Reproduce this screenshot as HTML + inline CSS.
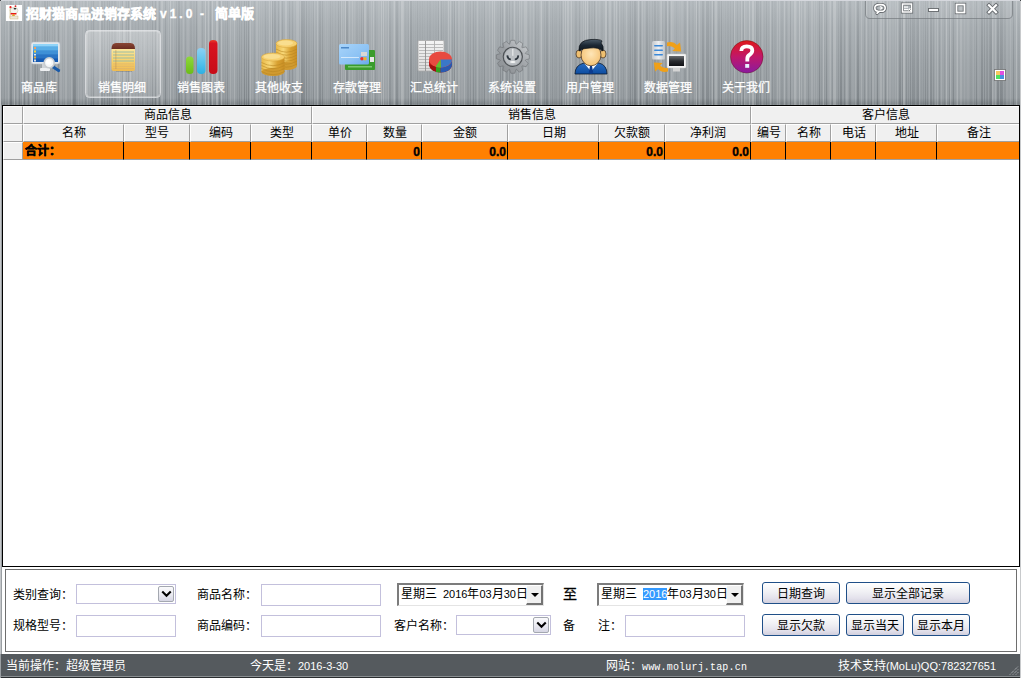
<!DOCTYPE html><html lang="zh-CN"><head><meta charset="utf-8"><style>
*{margin:0;padding:0;box-sizing:border-box}
html,body{width:1021px;height:678px;overflow:hidden;background:#fff}
body{position:relative;font-family:"Liberation Sans",sans-serif;font-size:12px;color:#000}
.a{position:absolute;white-space:nowrap}
.c{display:inline-block;width:1em;text-align:center;font-style:normal}
.d{font-size:11px}
#metal{position:absolute;left:0;top:0;width:1021px;height:678px;background:linear-gradient(#b6bcc0 0px,#aab0b4 25px,#a0a6aa 60px,#989ea2 98px,#80878b 104px,#9a9fa3 106px,#9a9fa3 678px)}
#metal svg{position:absolute;left:0;top:0}
#grid{position:absolute;left:2px;top:105px;width:1018px;height:462px;border:1px solid #000;background:#fff;overflow:hidden}
.hc{position:absolute;background:#f0f0f0;border-left:1px solid #fff;border-top:1px solid #fff;border-right:1px solid #a0a0a0;border-bottom:1px solid #a0a0a0;text-align:center;line-height:16px;font-size:12px;white-space:nowrap}
.oc{position:absolute;background:#ff8000;border-right:1px solid #000;border-bottom:1px solid #a0a0a0;text-align:right;font-weight:bold;line-height:20px;padding-right:1px;font-size:12px;-webkit-text-stroke:0.4px #000;white-space:nowrap}
#lower{position:absolute;left:2px;top:567px;width:1018px;height:87px;background:#fff}
#panel{position:absolute;left:5px;top:569px;width:1012px;height:83px;border:1px solid #6e6e6e;background:#fff}
#status{position:absolute;left:1px;top:654px;width:1019px;height:24px;background:#555a5e;border-bottom:1px solid #2a2d2f}
#status:after{content:"";position:absolute;left:0;right:0;top:22px;height:1px;background:#8a8f92}
.st{position:absolute;color:#fff;top:6px;line-height:12px;font-size:12px;white-space:nowrap}
.tb{position:absolute;color:#fff;-webkit-text-stroke:0.25px #fff;top:82px;line-height:13px;font-size:12px;white-space:nowrap;text-align:center;width:78px}
.lbl{position:absolute;line-height:14px;font-size:12px;white-space:nowrap}
.tx{position:absolute;border:1px solid #c3c0dc;background:#fff}
.cb{position:absolute;border:1px solid #a4a8b0;border-radius:2px;background:linear-gradient(#fafafc,#ececf2 50%,#d6d6e4)}
.btn{position:absolute;border:1px solid #1f4f88;border-radius:3px;background:linear-gradient(#ffffff,#f0f0f4 45%,#e4e2ec 75%,#d2d0de);text-align:center;line-height:21px;padding-top:1px;font-size:12px;white-space:nowrap}
.dp{position:absolute;width:147px;height:23px;background:#fff;border-top:2px solid #7c7c7c;border-left:2px solid #7c7c7c;border-bottom:1px solid #e4e4e4;border-right:1px solid #e4e4e4}
.dpb{position:absolute;left:127px;top:0px;width:17px;height:20px;background:#f0f0f0;border-left:1px solid #fff;border-top:1px solid #fff;border-right:2px solid #737373;border-bottom:2px solid #737373}
.dpb:after{content:"";position:absolute;left:4px;top:7px;border-left:4px solid transparent;border-right:4px solid transparent;border-top:4px solid #000}
.sp{display:inline-block;width:6px}
</style></head><body><div id="metal"><svg width="1021" height="106"><defs><linearGradient id="ds" x1="0" y1="0" x2="0" y2="1"><stop offset="0" stop-color="#2a3036" stop-opacity="0.35"/><stop offset="1" stop-color="#2a3036" stop-opacity="1"/></linearGradient></defs><rect x="0" y="0" width="1" height="106" fill="url(#ds)" fill-opacity="0.12"/><rect x="1" y="0" width="1" height="106" fill="url(#ds)" fill-opacity="0.06"/><rect x="4" y="0" width="1" height="106" fill="url(#ds)" fill-opacity="0.08"/><rect x="5" y="0" width="1" height="106" fill="#ffffff" fill-opacity="0.08"/><rect x="8" y="0" width="1" height="106" fill="#ffffff" fill-opacity="0.14"/><rect x="10" y="0" width="2" height="106" fill="url(#ds)" fill-opacity="0.23"/><rect x="14" y="0" width="1" height="106" fill="#ffffff" fill-opacity="0.22"/><rect x="15" y="0" width="1" height="106" fill="url(#ds)" fill-opacity="0.10"/><rect x="17" y="0" width="1" height="106" fill="#ffffff" fill-opacity="0.10"/><rect x="19" y="0" width="1" height="106" fill="url(#ds)" fill-opacity="0.17"/><rect x="21" y="0" width="1" height="106" fill="url(#ds)" fill-opacity="0.05"/><rect x="22" y="0" width="1" height="106" fill="#ffffff" fill-opacity="0.16"/><rect x="24" y="0" width="1" height="106" fill="url(#ds)" fill-opacity="0.22"/><rect x="26" y="0" width="1" height="106" fill="#ffffff" fill-opacity="0.07"/><rect x="28" y="0" width="1" height="106" fill="url(#ds)" fill-opacity="0.15"/><rect x="30" y="0" width="2" height="106" fill="#ffffff" fill-opacity="0.15"/><rect x="32" y="0" width="1" height="106" fill="url(#ds)" fill-opacity="0.07"/><rect x="34" y="0" width="1" height="106" fill="url(#ds)" fill-opacity="0.12"/><rect x="35" y="0" width="1" height="106" fill="url(#ds)" fill-opacity="0.22"/><rect x="37" y="0" width="1" height="106" fill="url(#ds)" fill-opacity="0.16"/><rect x="40" y="0" width="1" height="106" fill="#ffffff" fill-opacity="0.06"/><rect x="42" y="0" width="1" height="106" fill="url(#ds)" fill-opacity="0.05"/><rect x="44" y="0" width="2" height="106" fill="url(#ds)" fill-opacity="0.18"/><rect x="47" y="0" width="1" height="106" fill="url(#ds)" fill-opacity="0.22"/><rect x="49" y="0" width="1" height="106" fill="url(#ds)" fill-opacity="0.11"/><rect x="52" y="0" width="1" height="106" fill="url(#ds)" fill-opacity="0.08"/><rect x="54" y="0" width="1" height="106" fill="url(#ds)" fill-opacity="0.12"/><rect x="56" y="0" width="1" height="106" fill="#ffffff" fill-opacity="0.11"/><rect x="58" y="0" width="1" height="106" fill="url(#ds)" fill-opacity="0.21"/><rect x="60" y="0" width="2" height="106" fill="#ffffff" fill-opacity="0.10"/><rect x="63" y="0" width="1" height="106" fill="#ffffff" fill-opacity="0.07"/><rect x="65" y="0" width="2" height="106" fill="#ffffff" fill-opacity="0.13"/><rect x="69" y="0" width="1" height="106" fill="#ffffff" fill-opacity="0.04"/><rect x="71" y="0" width="1" height="106" fill="#ffffff" fill-opacity="0.14"/><rect x="73" y="0" width="2" height="106" fill="url(#ds)" fill-opacity="0.23"/><rect x="75" y="0" width="1" height="106" fill="url(#ds)" fill-opacity="0.20"/><rect x="78" y="0" width="1" height="106" fill="#ffffff" fill-opacity="0.11"/><rect x="80" y="0" width="2" height="106" fill="#ffffff" fill-opacity="0.07"/><rect x="83" y="0" width="1" height="106" fill="#ffffff" fill-opacity="0.10"/><rect x="84" y="0" width="1" height="106" fill="#ffffff" fill-opacity="0.07"/><rect x="85" y="0" width="1" height="106" fill="url(#ds)" fill-opacity="0.05"/><rect x="87" y="0" width="1" height="106" fill="#ffffff" fill-opacity="0.15"/><rect x="89" y="0" width="1" height="106" fill="#ffffff" fill-opacity="0.06"/><rect x="91" y="0" width="1" height="106" fill="url(#ds)" fill-opacity="0.10"/><rect x="93" y="0" width="1" height="106" fill="url(#ds)" fill-opacity="0.19"/><rect x="95" y="0" width="2" height="106" fill="#ffffff" fill-opacity="0.04"/><rect x="99" y="0" width="1" height="106" fill="#ffffff" fill-opacity="0.14"/><rect x="100" y="0" width="1" height="106" fill="#ffffff" fill-opacity="0.16"/><rect x="101" y="0" width="2" height="106" fill="url(#ds)" fill-opacity="0.14"/><rect x="104" y="0" width="1" height="106" fill="url(#ds)" fill-opacity="0.15"/><rect x="107" y="0" width="1" height="106" fill="url(#ds)" fill-opacity="0.16"/><rect x="109" y="0" width="1" height="106" fill="url(#ds)" fill-opacity="0.19"/><rect x="111" y="0" width="1" height="106" fill="url(#ds)" fill-opacity="0.11"/><rect x="112" y="0" width="1" height="106" fill="url(#ds)" fill-opacity="0.13"/><rect x="114" y="0" width="2" height="106" fill="url(#ds)" fill-opacity="0.11"/><rect x="117" y="0" width="1" height="106" fill="#ffffff" fill-opacity="0.06"/><rect x="119" y="0" width="1" height="106" fill="#ffffff" fill-opacity="0.13"/><rect x="122" y="0" width="1" height="106" fill="url(#ds)" fill-opacity="0.17"/><rect x="123" y="0" width="2" height="106" fill="#ffffff" fill-opacity="0.11"/><rect x="126" y="0" width="1" height="106" fill="url(#ds)" fill-opacity="0.13"/><rect x="128" y="0" width="1" height="106" fill="url(#ds)" fill-opacity="0.23"/><rect x="130" y="0" width="1" height="106" fill="#ffffff" fill-opacity="0.21"/><rect x="132" y="0" width="1" height="106" fill="url(#ds)" fill-opacity="0.05"/><rect x="135" y="0" width="1" height="106" fill="url(#ds)" fill-opacity="0.07"/><rect x="138" y="0" width="1" height="106" fill="url(#ds)" fill-opacity="0.11"/><rect x="141" y="0" width="1" height="106" fill="#ffffff" fill-opacity="0.04"/><rect x="142" y="0" width="1" height="106" fill="url(#ds)" fill-opacity="0.07"/><rect x="144" y="0" width="1" height="106" fill="#ffffff" fill-opacity="0.08"/><rect x="147" y="0" width="1" height="106" fill="url(#ds)" fill-opacity="0.11"/><rect x="150" y="0" width="1" height="106" fill="url(#ds)" fill-opacity="0.05"/><rect x="152" y="0" width="1" height="106" fill="url(#ds)" fill-opacity="0.20"/><rect x="155" y="0" width="1" height="106" fill="url(#ds)" fill-opacity="0.22"/><rect x="157" y="0" width="1" height="106" fill="#ffffff" fill-opacity="0.13"/><rect x="159" y="0" width="1" height="106" fill="url(#ds)" fill-opacity="0.20"/><rect x="161" y="0" width="1" height="106" fill="#ffffff" fill-opacity="0.15"/><rect x="162" y="0" width="1" height="106" fill="#ffffff" fill-opacity="0.16"/><rect x="165" y="0" width="1" height="106" fill="url(#ds)" fill-opacity="0.20"/><rect x="168" y="0" width="1" height="106" fill="#ffffff" fill-opacity="0.09"/><rect x="169" y="0" width="1" height="106" fill="url(#ds)" fill-opacity="0.05"/><rect x="170" y="0" width="1" height="106" fill="#ffffff" fill-opacity="0.22"/><rect x="173" y="0" width="1" height="106" fill="#ffffff" fill-opacity="0.09"/><rect x="176" y="0" width="1" height="106" fill="url(#ds)" fill-opacity="0.14"/><rect x="178" y="0" width="2" height="106" fill="url(#ds)" fill-opacity="0.22"/><rect x="181" y="0" width="1" height="106" fill="url(#ds)" fill-opacity="0.08"/><rect x="183" y="0" width="1" height="106" fill="#ffffff" fill-opacity="0.11"/><rect x="185" y="0" width="1" height="106" fill="url(#ds)" fill-opacity="0.13"/><rect x="187" y="0" width="2" height="106" fill="#ffffff" fill-opacity="0.06"/><rect x="190" y="0" width="2" height="106" fill="url(#ds)" fill-opacity="0.11"/><rect x="193" y="0" width="1" height="106" fill="url(#ds)" fill-opacity="0.08"/><rect x="194" y="0" width="1" height="106" fill="url(#ds)" fill-opacity="0.07"/><rect x="196" y="0" width="1" height="106" fill="url(#ds)" fill-opacity="0.24"/><rect x="198" y="0" width="1" height="106" fill="#ffffff" fill-opacity="0.10"/><rect x="199" y="0" width="2" height="106" fill="#ffffff" fill-opacity="0.10"/><rect x="202" y="0" width="1" height="106" fill="url(#ds)" fill-opacity="0.12"/><rect x="205" y="0" width="1" height="106" fill="#ffffff" fill-opacity="0.21"/><rect x="206" y="0" width="1" height="106" fill="url(#ds)" fill-opacity="0.06"/><rect x="208" y="0" width="1" height="106" fill="#ffffff" fill-opacity="0.18"/><rect x="210" y="0" width="1" height="106" fill="url(#ds)" fill-opacity="0.21"/><rect x="212" y="0" width="1" height="106" fill="#ffffff" fill-opacity="0.21"/><rect x="215" y="0" width="1" height="106" fill="url(#ds)" fill-opacity="0.06"/><rect x="216" y="0" width="2" height="106" fill="#ffffff" fill-opacity="0.20"/><rect x="219" y="0" width="1" height="106" fill="url(#ds)" fill-opacity="0.20"/><rect x="220" y="0" width="1" height="106" fill="url(#ds)" fill-opacity="0.05"/><rect x="221" y="0" width="1" height="106" fill="#ffffff" fill-opacity="0.22"/><rect x="223" y="0" width="1" height="106" fill="url(#ds)" fill-opacity="0.05"/><rect x="225" y="0" width="1" height="106" fill="url(#ds)" fill-opacity="0.09"/><rect x="227" y="0" width="1" height="106" fill="url(#ds)" fill-opacity="0.17"/><rect x="230" y="0" width="1" height="106" fill="#ffffff" fill-opacity="0.13"/><rect x="232" y="0" width="1" height="106" fill="#ffffff" fill-opacity="0.04"/><rect x="234" y="0" width="1" height="106" fill="#ffffff" fill-opacity="0.17"/><rect x="237" y="0" width="1" height="106" fill="url(#ds)" fill-opacity="0.09"/><rect x="239" y="0" width="1" height="106" fill="url(#ds)" fill-opacity="0.17"/><rect x="241" y="0" width="1" height="106" fill="url(#ds)" fill-opacity="0.12"/><rect x="244" y="0" width="1" height="106" fill="url(#ds)" fill-opacity="0.24"/><rect x="246" y="0" width="1" height="106" fill="url(#ds)" fill-opacity="0.18"/><rect x="248" y="0" width="1" height="106" fill="url(#ds)" fill-opacity="0.24"/><rect x="250" y="0" width="1" height="106" fill="#ffffff" fill-opacity="0.17"/><rect x="252" y="0" width="1" height="106" fill="#ffffff" fill-opacity="0.06"/><rect x="254" y="0" width="1" height="106" fill="url(#ds)" fill-opacity="0.10"/><rect x="256" y="0" width="2" height="106" fill="#ffffff" fill-opacity="0.12"/><rect x="259" y="0" width="1" height="106" fill="#ffffff" fill-opacity="0.09"/><rect x="261" y="0" width="1" height="106" fill="#ffffff" fill-opacity="0.05"/><rect x="263" y="0" width="1" height="106" fill="#ffffff" fill-opacity="0.04"/><rect x="265" y="0" width="1" height="106" fill="url(#ds)" fill-opacity="0.14"/><rect x="267" y="0" width="1" height="106" fill="url(#ds)" fill-opacity="0.04"/><rect x="269" y="0" width="1" height="106" fill="#ffffff" fill-opacity="0.15"/><rect x="271" y="0" width="1" height="106" fill="#ffffff" fill-opacity="0.15"/><rect x="272" y="0" width="1" height="106" fill="url(#ds)" fill-opacity="0.21"/><rect x="274" y="0" width="2" height="106" fill="url(#ds)" fill-opacity="0.20"/><rect x="278" y="0" width="1" height="106" fill="url(#ds)" fill-opacity="0.18"/><rect x="280" y="0" width="1" height="106" fill="#ffffff" fill-opacity="0.15"/><rect x="282" y="0" width="1" height="106" fill="url(#ds)" fill-opacity="0.18"/><rect x="285" y="0" width="2" height="106" fill="#ffffff" fill-opacity="0.17"/><rect x="289" y="0" width="1" height="106" fill="url(#ds)" fill-opacity="0.19"/><rect x="292" y="0" width="1" height="106" fill="url(#ds)" fill-opacity="0.16"/><rect x="294" y="0" width="1" height="106" fill="#ffffff" fill-opacity="0.06"/><rect x="296" y="0" width="1" height="106" fill="#ffffff" fill-opacity="0.12"/><rect x="297" y="0" width="2" height="106" fill="#ffffff" fill-opacity="0.14"/><rect x="300" y="0" width="1" height="106" fill="#ffffff" fill-opacity="0.12"/><rect x="301" y="0" width="2" height="106" fill="url(#ds)" fill-opacity="0.22"/><rect x="303" y="0" width="2" height="106" fill="url(#ds)" fill-opacity="0.19"/><rect x="306" y="0" width="1" height="106" fill="url(#ds)" fill-opacity="0.21"/><rect x="308" y="0" width="2" height="106" fill="url(#ds)" fill-opacity="0.09"/><rect x="311" y="0" width="1" height="106" fill="url(#ds)" fill-opacity="0.06"/><rect x="313" y="0" width="1" height="106" fill="url(#ds)" fill-opacity="0.17"/><rect x="314" y="0" width="1" height="106" fill="#ffffff" fill-opacity="0.09"/><rect x="316" y="0" width="1" height="106" fill="url(#ds)" fill-opacity="0.04"/><rect x="317" y="0" width="1" height="106" fill="#ffffff" fill-opacity="0.16"/><rect x="319" y="0" width="2" height="106" fill="url(#ds)" fill-opacity="0.18"/><rect x="322" y="0" width="1" height="106" fill="url(#ds)" fill-opacity="0.19"/><rect x="325" y="0" width="1" height="106" fill="#ffffff" fill-opacity="0.06"/><rect x="327" y="0" width="1" height="106" fill="#ffffff" fill-opacity="0.05"/><rect x="330" y="0" width="1" height="106" fill="url(#ds)" fill-opacity="0.12"/><rect x="332" y="0" width="1" height="106" fill="url(#ds)" fill-opacity="0.07"/><rect x="335" y="0" width="1" height="106" fill="url(#ds)" fill-opacity="0.07"/><rect x="338" y="0" width="1" height="106" fill="url(#ds)" fill-opacity="0.18"/><rect x="340" y="0" width="1" height="106" fill="url(#ds)" fill-opacity="0.14"/><rect x="341" y="0" width="1" height="106" fill="#ffffff" fill-opacity="0.13"/><rect x="343" y="0" width="1" height="106" fill="#ffffff" fill-opacity="0.07"/><rect x="345" y="0" width="1" height="106" fill="#ffffff" fill-opacity="0.19"/><rect x="346" y="0" width="1" height="106" fill="url(#ds)" fill-opacity="0.21"/><rect x="347" y="0" width="1" height="106" fill="url(#ds)" fill-opacity="0.22"/><rect x="349" y="0" width="1" height="106" fill="#ffffff" fill-opacity="0.11"/><rect x="352" y="0" width="1" height="106" fill="#ffffff" fill-opacity="0.12"/><rect x="354" y="0" width="1" height="106" fill="#ffffff" fill-opacity="0.05"/><rect x="356" y="0" width="2" height="106" fill="url(#ds)" fill-opacity="0.09"/><rect x="359" y="0" width="1" height="106" fill="url(#ds)" fill-opacity="0.08"/><rect x="361" y="0" width="1" height="106" fill="url(#ds)" fill-opacity="0.20"/><rect x="363" y="0" width="1" height="106" fill="url(#ds)" fill-opacity="0.18"/><rect x="364" y="0" width="2" height="106" fill="#ffffff" fill-opacity="0.15"/><rect x="367" y="0" width="2" height="106" fill="url(#ds)" fill-opacity="0.14"/><rect x="371" y="0" width="1" height="106" fill="#ffffff" fill-opacity="0.11"/><rect x="373" y="0" width="1" height="106" fill="#ffffff" fill-opacity="0.17"/><rect x="375" y="0" width="1" height="106" fill="url(#ds)" fill-opacity="0.10"/><rect x="378" y="0" width="2" height="106" fill="#ffffff" fill-opacity="0.07"/><rect x="381" y="0" width="1" height="106" fill="#ffffff" fill-opacity="0.20"/><rect x="383" y="0" width="1" height="106" fill="#ffffff" fill-opacity="0.20"/><rect x="385" y="0" width="1" height="106" fill="#ffffff" fill-opacity="0.07"/><rect x="386" y="0" width="1" height="106" fill="#ffffff" fill-opacity="0.06"/><rect x="388" y="0" width="1" height="106" fill="#ffffff" fill-opacity="0.14"/><rect x="389" y="0" width="2" height="106" fill="url(#ds)" fill-opacity="0.12"/><rect x="393" y="0" width="1" height="106" fill="#ffffff" fill-opacity="0.10"/><rect x="394" y="0" width="1" height="106" fill="#ffffff" fill-opacity="0.21"/><rect x="396" y="0" width="2" height="106" fill="url(#ds)" fill-opacity="0.17"/><rect x="399" y="0" width="1" height="106" fill="#ffffff" fill-opacity="0.08"/><rect x="401" y="0" width="2" height="106" fill="#ffffff" fill-opacity="0.21"/><rect x="403" y="0" width="1" height="106" fill="#ffffff" fill-opacity="0.17"/><rect x="405" y="0" width="1" height="106" fill="url(#ds)" fill-opacity="0.05"/><rect x="408" y="0" width="1" height="106" fill="url(#ds)" fill-opacity="0.09"/><rect x="409" y="0" width="1" height="106" fill="#ffffff" fill-opacity="0.13"/><rect x="410" y="0" width="2" height="106" fill="url(#ds)" fill-opacity="0.21"/><rect x="413" y="0" width="1" height="106" fill="url(#ds)" fill-opacity="0.05"/><rect x="415" y="0" width="1" height="106" fill="url(#ds)" fill-opacity="0.05"/><rect x="417" y="0" width="1" height="106" fill="url(#ds)" fill-opacity="0.15"/><rect x="419" y="0" width="2" height="106" fill="url(#ds)" fill-opacity="0.06"/><rect x="422" y="0" width="1" height="106" fill="url(#ds)" fill-opacity="0.08"/><rect x="424" y="0" width="1" height="106" fill="url(#ds)" fill-opacity="0.04"/><rect x="427" y="0" width="1" height="106" fill="url(#ds)" fill-opacity="0.10"/><rect x="429" y="0" width="2" height="106" fill="url(#ds)" fill-opacity="0.09"/><rect x="433" y="0" width="1" height="106" fill="url(#ds)" fill-opacity="0.05"/><rect x="435" y="0" width="2" height="106" fill="url(#ds)" fill-opacity="0.05"/><rect x="438" y="0" width="1" height="106" fill="url(#ds)" fill-opacity="0.17"/><rect x="439" y="0" width="1" height="106" fill="#ffffff" fill-opacity="0.12"/><rect x="441" y="0" width="1" height="106" fill="url(#ds)" fill-opacity="0.18"/><rect x="443" y="0" width="1" height="106" fill="url(#ds)" fill-opacity="0.08"/><rect x="445" y="0" width="2" height="106" fill="url(#ds)" fill-opacity="0.05"/><rect x="448" y="0" width="1" height="106" fill="#ffffff" fill-opacity="0.19"/><rect x="450" y="0" width="1" height="106" fill="#ffffff" fill-opacity="0.18"/><rect x="452" y="0" width="1" height="106" fill="url(#ds)" fill-opacity="0.14"/><rect x="454" y="0" width="1" height="106" fill="url(#ds)" fill-opacity="0.22"/><rect x="455" y="0" width="1" height="106" fill="#ffffff" fill-opacity="0.11"/><rect x="457" y="0" width="1" height="106" fill="url(#ds)" fill-opacity="0.07"/><rect x="458" y="0" width="2" height="106" fill="#ffffff" fill-opacity="0.11"/><rect x="461" y="0" width="2" height="106" fill="#ffffff" fill-opacity="0.05"/><rect x="464" y="0" width="1" height="106" fill="#ffffff" fill-opacity="0.16"/><rect x="467" y="0" width="2" height="106" fill="url(#ds)" fill-opacity="0.10"/><rect x="470" y="0" width="1" height="106" fill="url(#ds)" fill-opacity="0.13"/><rect x="471" y="0" width="1" height="106" fill="#ffffff" fill-opacity="0.05"/><rect x="473" y="0" width="1" height="106" fill="url(#ds)" fill-opacity="0.19"/><rect x="475" y="0" width="1" height="106" fill="url(#ds)" fill-opacity="0.10"/><rect x="477" y="0" width="1" height="106" fill="#ffffff" fill-opacity="0.13"/><rect x="479" y="0" width="1" height="106" fill="url(#ds)" fill-opacity="0.08"/><rect x="481" y="0" width="2" height="106" fill="url(#ds)" fill-opacity="0.05"/><rect x="484" y="0" width="1" height="106" fill="url(#ds)" fill-opacity="0.19"/><rect x="485" y="0" width="1" height="106" fill="#ffffff" fill-opacity="0.05"/><rect x="486" y="0" width="1" height="106" fill="#ffffff" fill-opacity="0.05"/><rect x="489" y="0" width="1" height="106" fill="#ffffff" fill-opacity="0.10"/><rect x="492" y="0" width="1" height="106" fill="#ffffff" fill-opacity="0.17"/><rect x="494" y="0" width="1" height="106" fill="#ffffff" fill-opacity="0.17"/><rect x="497" y="0" width="2" height="106" fill="url(#ds)" fill-opacity="0.05"/><rect x="500" y="0" width="1" height="106" fill="url(#ds)" fill-opacity="0.23"/><rect x="502" y="0" width="1" height="106" fill="url(#ds)" fill-opacity="0.20"/><rect x="504" y="0" width="1" height="106" fill="#ffffff" fill-opacity="0.18"/><rect x="506" y="0" width="2" height="106" fill="url(#ds)" fill-opacity="0.16"/><rect x="509" y="0" width="1" height="106" fill="url(#ds)" fill-opacity="0.20"/><rect x="512" y="0" width="1" height="106" fill="url(#ds)" fill-opacity="0.12"/><rect x="514" y="0" width="1" height="106" fill="#ffffff" fill-opacity="0.16"/><rect x="516" y="0" width="1" height="106" fill="url(#ds)" fill-opacity="0.07"/><rect x="518" y="0" width="1" height="106" fill="url(#ds)" fill-opacity="0.09"/><rect x="519" y="0" width="1" height="106" fill="#ffffff" fill-opacity="0.13"/><rect x="521" y="0" width="1" height="106" fill="#ffffff" fill-opacity="0.12"/><rect x="524" y="0" width="2" height="106" fill="#ffffff" fill-opacity="0.14"/><rect x="526" y="0" width="1" height="106" fill="#ffffff" fill-opacity="0.14"/><rect x="528" y="0" width="1" height="106" fill="url(#ds)" fill-opacity="0.08"/><rect x="530" y="0" width="1" height="106" fill="#ffffff" fill-opacity="0.07"/><rect x="533" y="0" width="1" height="106" fill="#ffffff" fill-opacity="0.11"/><rect x="535" y="0" width="1" height="106" fill="url(#ds)" fill-opacity="0.17"/><rect x="536" y="0" width="2" height="106" fill="url(#ds)" fill-opacity="0.05"/><rect x="538" y="0" width="1" height="106" fill="url(#ds)" fill-opacity="0.09"/><rect x="540" y="0" width="1" height="106" fill="#ffffff" fill-opacity="0.09"/><rect x="541" y="0" width="1" height="106" fill="#ffffff" fill-opacity="0.22"/><rect x="544" y="0" width="1" height="106" fill="url(#ds)" fill-opacity="0.11"/><rect x="546" y="0" width="1" height="106" fill="url(#ds)" fill-opacity="0.19"/><rect x="547" y="0" width="1" height="106" fill="url(#ds)" fill-opacity="0.18"/><rect x="549" y="0" width="1" height="106" fill="#ffffff" fill-opacity="0.10"/><rect x="550" y="0" width="1" height="106" fill="url(#ds)" fill-opacity="0.05"/><rect x="552" y="0" width="1" height="106" fill="url(#ds)" fill-opacity="0.12"/><rect x="554" y="0" width="1" height="106" fill="url(#ds)" fill-opacity="0.06"/><rect x="555" y="0" width="1" height="106" fill="url(#ds)" fill-opacity="0.05"/><rect x="556" y="0" width="1" height="106" fill="url(#ds)" fill-opacity="0.07"/><rect x="559" y="0" width="1" height="106" fill="url(#ds)" fill-opacity="0.12"/><rect x="561" y="0" width="1" height="106" fill="url(#ds)" fill-opacity="0.17"/><rect x="563" y="0" width="1" height="106" fill="#ffffff" fill-opacity="0.14"/><rect x="565" y="0" width="1" height="106" fill="#ffffff" fill-opacity="0.20"/><rect x="567" y="0" width="2" height="106" fill="#ffffff" fill-opacity="0.17"/><rect x="570" y="0" width="1" height="106" fill="#ffffff" fill-opacity="0.07"/><rect x="571" y="0" width="1" height="106" fill="#ffffff" fill-opacity="0.20"/><rect x="573" y="0" width="1" height="106" fill="#ffffff" fill-opacity="0.05"/><rect x="575" y="0" width="2" height="106" fill="url(#ds)" fill-opacity="0.12"/><rect x="579" y="0" width="1" height="106" fill="url(#ds)" fill-opacity="0.19"/><rect x="581" y="0" width="1" height="106" fill="#ffffff" fill-opacity="0.07"/><rect x="583" y="0" width="1" height="106" fill="#ffffff" fill-opacity="0.13"/><rect x="585" y="0" width="1" height="106" fill="#ffffff" fill-opacity="0.21"/><rect x="587" y="0" width="1" height="106" fill="#ffffff" fill-opacity="0.21"/><rect x="589" y="0" width="1" height="106" fill="url(#ds)" fill-opacity="0.16"/><rect x="591" y="0" width="2" height="106" fill="url(#ds)" fill-opacity="0.08"/><rect x="594" y="0" width="1" height="106" fill="url(#ds)" fill-opacity="0.21"/><rect x="596" y="0" width="1" height="106" fill="#ffffff" fill-opacity="0.11"/><rect x="599" y="0" width="1" height="106" fill="#ffffff" fill-opacity="0.06"/><rect x="601" y="0" width="2" height="106" fill="url(#ds)" fill-opacity="0.08"/><rect x="605" y="0" width="2" height="106" fill="#ffffff" fill-opacity="0.19"/><rect x="607" y="0" width="1" height="106" fill="url(#ds)" fill-opacity="0.15"/><rect x="609" y="0" width="2" height="106" fill="#ffffff" fill-opacity="0.14"/><rect x="612" y="0" width="1" height="106" fill="url(#ds)" fill-opacity="0.13"/><rect x="614" y="0" width="1" height="106" fill="#ffffff" fill-opacity="0.15"/><rect x="616" y="0" width="1" height="106" fill="#ffffff" fill-opacity="0.18"/><rect x="618" y="0" width="1" height="106" fill="url(#ds)" fill-opacity="0.12"/><rect x="619" y="0" width="1" height="106" fill="#ffffff" fill-opacity="0.11"/><rect x="621" y="0" width="1" height="106" fill="url(#ds)" fill-opacity="0.05"/><rect x="623" y="0" width="1" height="106" fill="url(#ds)" fill-opacity="0.10"/><rect x="626" y="0" width="1" height="106" fill="#ffffff" fill-opacity="0.13"/><rect x="628" y="0" width="2" height="106" fill="url(#ds)" fill-opacity="0.07"/><rect x="630" y="0" width="1" height="106" fill="url(#ds)" fill-opacity="0.20"/><rect x="632" y="0" width="1" height="106" fill="url(#ds)" fill-opacity="0.14"/><rect x="634" y="0" width="2" height="106" fill="url(#ds)" fill-opacity="0.23"/><rect x="636" y="0" width="1" height="106" fill="url(#ds)" fill-opacity="0.09"/><rect x="638" y="0" width="1" height="106" fill="#ffffff" fill-opacity="0.19"/><rect x="640" y="0" width="1" height="106" fill="url(#ds)" fill-opacity="0.22"/><rect x="642" y="0" width="1" height="106" fill="#ffffff" fill-opacity="0.13"/><rect x="644" y="0" width="1" height="106" fill="#ffffff" fill-opacity="0.07"/><rect x="646" y="0" width="2" height="106" fill="url(#ds)" fill-opacity="0.18"/><rect x="649" y="0" width="1" height="106" fill="url(#ds)" fill-opacity="0.09"/><rect x="652" y="0" width="1" height="106" fill="url(#ds)" fill-opacity="0.11"/><rect x="654" y="0" width="1" height="106" fill="url(#ds)" fill-opacity="0.18"/><rect x="655" y="0" width="1" height="106" fill="url(#ds)" fill-opacity="0.17"/><rect x="657" y="0" width="2" height="106" fill="url(#ds)" fill-opacity="0.09"/><rect x="660" y="0" width="1" height="106" fill="#ffffff" fill-opacity="0.10"/><rect x="661" y="0" width="1" height="106" fill="#ffffff" fill-opacity="0.15"/><rect x="662" y="0" width="1" height="106" fill="url(#ds)" fill-opacity="0.09"/><rect x="665" y="0" width="2" height="106" fill="url(#ds)" fill-opacity="0.19"/><rect x="667" y="0" width="1" height="106" fill="#ffffff" fill-opacity="0.15"/><rect x="669" y="0" width="1" height="106" fill="url(#ds)" fill-opacity="0.22"/><rect x="671" y="0" width="1" height="106" fill="#ffffff" fill-opacity="0.16"/><rect x="672" y="0" width="1" height="106" fill="#ffffff" fill-opacity="0.10"/><rect x="673" y="0" width="1" height="106" fill="#ffffff" fill-opacity="0.08"/><rect x="676" y="0" width="1" height="106" fill="url(#ds)" fill-opacity="0.08"/><rect x="679" y="0" width="1" height="106" fill="#ffffff" fill-opacity="0.04"/><rect x="681" y="0" width="2" height="106" fill="#ffffff" fill-opacity="0.06"/><rect x="684" y="0" width="2" height="106" fill="url(#ds)" fill-opacity="0.12"/><rect x="687" y="0" width="1" height="106" fill="#ffffff" fill-opacity="0.19"/><rect x="689" y="0" width="1" height="106" fill="url(#ds)" fill-opacity="0.13"/><rect x="692" y="0" width="2" height="106" fill="url(#ds)" fill-opacity="0.07"/><rect x="694" y="0" width="1" height="106" fill="#ffffff" fill-opacity="0.04"/><rect x="696" y="0" width="1" height="106" fill="#ffffff" fill-opacity="0.20"/><rect x="697" y="0" width="1" height="106" fill="url(#ds)" fill-opacity="0.17"/><rect x="699" y="0" width="1" height="106" fill="#ffffff" fill-opacity="0.13"/><rect x="702" y="0" width="2" height="106" fill="url(#ds)" fill-opacity="0.20"/><rect x="705" y="0" width="1" height="106" fill="#ffffff" fill-opacity="0.09"/><rect x="706" y="0" width="2" height="106" fill="url(#ds)" fill-opacity="0.18"/><rect x="708" y="0" width="1" height="106" fill="url(#ds)" fill-opacity="0.19"/><rect x="710" y="0" width="1" height="106" fill="url(#ds)" fill-opacity="0.13"/><rect x="712" y="0" width="1" height="106" fill="#ffffff" fill-opacity="0.16"/><rect x="713" y="0" width="1" height="106" fill="url(#ds)" fill-opacity="0.23"/><rect x="715" y="0" width="2" height="106" fill="#ffffff" fill-opacity="0.15"/><rect x="718" y="0" width="2" height="106" fill="url(#ds)" fill-opacity="0.14"/><rect x="721" y="0" width="1" height="106" fill="url(#ds)" fill-opacity="0.23"/><rect x="723" y="0" width="1" height="106" fill="url(#ds)" fill-opacity="0.04"/><rect x="725" y="0" width="1" height="106" fill="url(#ds)" fill-opacity="0.08"/><rect x="727" y="0" width="2" height="106" fill="url(#ds)" fill-opacity="0.08"/><rect x="730" y="0" width="1" height="106" fill="url(#ds)" fill-opacity="0.12"/><rect x="733" y="0" width="1" height="106" fill="url(#ds)" fill-opacity="0.15"/><rect x="734" y="0" width="1" height="106" fill="#ffffff" fill-opacity="0.17"/><rect x="737" y="0" width="1" height="106" fill="url(#ds)" fill-opacity="0.12"/><rect x="740" y="0" width="1" height="106" fill="url(#ds)" fill-opacity="0.07"/><rect x="741" y="0" width="1" height="106" fill="#ffffff" fill-opacity="0.15"/><rect x="743" y="0" width="1" height="106" fill="url(#ds)" fill-opacity="0.18"/><rect x="744" y="0" width="1" height="106" fill="#ffffff" fill-opacity="0.16"/><rect x="745" y="0" width="2" height="106" fill="#ffffff" fill-opacity="0.05"/><rect x="749" y="0" width="1" height="106" fill="#ffffff" fill-opacity="0.21"/><rect x="752" y="0" width="2" height="106" fill="#ffffff" fill-opacity="0.20"/><rect x="755" y="0" width="1" height="106" fill="#ffffff" fill-opacity="0.08"/><rect x="756" y="0" width="1" height="106" fill="url(#ds)" fill-opacity="0.22"/><rect x="757" y="0" width="2" height="106" fill="url(#ds)" fill-opacity="0.14"/><rect x="760" y="0" width="1" height="106" fill="url(#ds)" fill-opacity="0.17"/><rect x="762" y="0" width="1" height="106" fill="#ffffff" fill-opacity="0.09"/><rect x="764" y="0" width="1" height="106" fill="url(#ds)" fill-opacity="0.05"/><rect x="766" y="0" width="1" height="106" fill="url(#ds)" fill-opacity="0.16"/><rect x="768" y="0" width="1" height="106" fill="url(#ds)" fill-opacity="0.05"/><rect x="770" y="0" width="1" height="106" fill="#ffffff" fill-opacity="0.18"/><rect x="772" y="0" width="1" height="106" fill="url(#ds)" fill-opacity="0.15"/><rect x="774" y="0" width="2" height="106" fill="url(#ds)" fill-opacity="0.06"/><rect x="777" y="0" width="1" height="106" fill="#ffffff" fill-opacity="0.13"/><rect x="779" y="0" width="1" height="106" fill="#ffffff" fill-opacity="0.13"/><rect x="781" y="0" width="2" height="106" fill="url(#ds)" fill-opacity="0.08"/><rect x="784" y="0" width="1" height="106" fill="#ffffff" fill-opacity="0.19"/><rect x="786" y="0" width="1" height="106" fill="url(#ds)" fill-opacity="0.10"/><rect x="788" y="0" width="2" height="106" fill="#ffffff" fill-opacity="0.07"/><rect x="790" y="0" width="1" height="106" fill="url(#ds)" fill-opacity="0.18"/><rect x="791" y="0" width="2" height="106" fill="#ffffff" fill-opacity="0.06"/><rect x="794" y="0" width="2" height="106" fill="#ffffff" fill-opacity="0.20"/><rect x="796" y="0" width="1" height="106" fill="#ffffff" fill-opacity="0.09"/><rect x="799" y="0" width="1" height="106" fill="#ffffff" fill-opacity="0.22"/><rect x="801" y="0" width="1" height="106" fill="#ffffff" fill-opacity="0.15"/><rect x="804" y="0" width="2" height="106" fill="#ffffff" fill-opacity="0.14"/><rect x="808" y="0" width="1" height="106" fill="url(#ds)" fill-opacity="0.13"/><rect x="811" y="0" width="2" height="106" fill="#ffffff" fill-opacity="0.12"/><rect x="814" y="0" width="1" height="106" fill="#ffffff" fill-opacity="0.10"/><rect x="816" y="0" width="1" height="106" fill="#ffffff" fill-opacity="0.09"/><rect x="819" y="0" width="1" height="106" fill="url(#ds)" fill-opacity="0.23"/><rect x="821" y="0" width="1" height="106" fill="url(#ds)" fill-opacity="0.07"/><rect x="823" y="0" width="1" height="106" fill="#ffffff" fill-opacity="0.21"/><rect x="824" y="0" width="1" height="106" fill="url(#ds)" fill-opacity="0.06"/><rect x="826" y="0" width="1" height="106" fill="url(#ds)" fill-opacity="0.20"/><rect x="828" y="0" width="1" height="106" fill="#ffffff" fill-opacity="0.06"/><rect x="829" y="0" width="1" height="106" fill="#ffffff" fill-opacity="0.11"/><rect x="830" y="0" width="1" height="106" fill="#ffffff" fill-opacity="0.18"/><rect x="832" y="0" width="1" height="106" fill="url(#ds)" fill-opacity="0.10"/><rect x="833" y="0" width="1" height="106" fill="#ffffff" fill-opacity="0.17"/><rect x="834" y="0" width="2" height="106" fill="#ffffff" fill-opacity="0.19"/><rect x="838" y="0" width="1" height="106" fill="url(#ds)" fill-opacity="0.12"/><rect x="840" y="0" width="2" height="106" fill="url(#ds)" fill-opacity="0.22"/><rect x="844" y="0" width="1" height="106" fill="url(#ds)" fill-opacity="0.17"/><rect x="846" y="0" width="1" height="106" fill="#ffffff" fill-opacity="0.15"/><rect x="847" y="0" width="1" height="106" fill="#ffffff" fill-opacity="0.11"/><rect x="849" y="0" width="1" height="106" fill="url(#ds)" fill-opacity="0.14"/><rect x="850" y="0" width="1" height="106" fill="url(#ds)" fill-opacity="0.14"/><rect x="852" y="0" width="2" height="106" fill="#ffffff" fill-opacity="0.04"/><rect x="855" y="0" width="1" height="106" fill="#ffffff" fill-opacity="0.14"/><rect x="857" y="0" width="2" height="106" fill="url(#ds)" fill-opacity="0.23"/><rect x="861" y="0" width="1" height="106" fill="#ffffff" fill-opacity="0.14"/><rect x="864" y="0" width="1" height="106" fill="url(#ds)" fill-opacity="0.14"/><rect x="866" y="0" width="1" height="106" fill="#ffffff" fill-opacity="0.17"/><rect x="868" y="0" width="1" height="106" fill="url(#ds)" fill-opacity="0.08"/><rect x="871" y="0" width="1" height="106" fill="url(#ds)" fill-opacity="0.16"/><rect x="872" y="0" width="1" height="106" fill="#ffffff" fill-opacity="0.11"/><rect x="873" y="0" width="1" height="106" fill="#ffffff" fill-opacity="0.12"/><rect x="875" y="0" width="1" height="106" fill="#ffffff" fill-opacity="0.08"/><rect x="877" y="0" width="1" height="106" fill="url(#ds)" fill-opacity="0.24"/><rect x="879" y="0" width="1" height="106" fill="#ffffff" fill-opacity="0.06"/><rect x="880" y="0" width="2" height="106" fill="#ffffff" fill-opacity="0.16"/><rect x="883" y="0" width="1" height="106" fill="#ffffff" fill-opacity="0.15"/><rect x="885" y="0" width="1" height="106" fill="url(#ds)" fill-opacity="0.19"/><rect x="887" y="0" width="1" height="106" fill="#ffffff" fill-opacity="0.19"/><rect x="889" y="0" width="2" height="106" fill="#ffffff" fill-opacity="0.09"/><rect x="892" y="0" width="2" height="106" fill="#ffffff" fill-opacity="0.04"/><rect x="895" y="0" width="1" height="106" fill="#ffffff" fill-opacity="0.09"/><rect x="897" y="0" width="1" height="106" fill="#ffffff" fill-opacity="0.15"/><rect x="899" y="0" width="1" height="106" fill="url(#ds)" fill-opacity="0.21"/><rect x="900" y="0" width="1" height="106" fill="url(#ds)" fill-opacity="0.22"/><rect x="902" y="0" width="1" height="106" fill="url(#ds)" fill-opacity="0.17"/><rect x="903" y="0" width="2" height="106" fill="#ffffff" fill-opacity="0.21"/><rect x="906" y="0" width="1" height="106" fill="url(#ds)" fill-opacity="0.16"/><rect x="908" y="0" width="1" height="106" fill="url(#ds)" fill-opacity="0.11"/><rect x="910" y="0" width="1" height="106" fill="url(#ds)" fill-opacity="0.20"/><rect x="912" y="0" width="1" height="106" fill="url(#ds)" fill-opacity="0.16"/><rect x="913" y="0" width="2" height="106" fill="url(#ds)" fill-opacity="0.15"/><rect x="916" y="0" width="1" height="106" fill="url(#ds)" fill-opacity="0.08"/><rect x="917" y="0" width="2" height="106" fill="url(#ds)" fill-opacity="0.17"/><rect x="919" y="0" width="1" height="106" fill="#ffffff" fill-opacity="0.12"/><rect x="921" y="0" width="1" height="106" fill="url(#ds)" fill-opacity="0.05"/><rect x="923" y="0" width="1" height="106" fill="url(#ds)" fill-opacity="0.09"/><rect x="925" y="0" width="1" height="106" fill="url(#ds)" fill-opacity="0.19"/><rect x="927" y="0" width="1" height="106" fill="url(#ds)" fill-opacity="0.15"/><rect x="929" y="0" width="1" height="106" fill="#ffffff" fill-opacity="0.12"/><rect x="930" y="0" width="1" height="106" fill="url(#ds)" fill-opacity="0.17"/><rect x="931" y="0" width="1" height="106" fill="url(#ds)" fill-opacity="0.18"/><rect x="933" y="0" width="1" height="106" fill="url(#ds)" fill-opacity="0.14"/><rect x="935" y="0" width="1" height="106" fill="#ffffff" fill-opacity="0.11"/><rect x="937" y="0" width="1" height="106" fill="#ffffff" fill-opacity="0.16"/><rect x="939" y="0" width="1" height="106" fill="url(#ds)" fill-opacity="0.15"/><rect x="941" y="0" width="1" height="106" fill="#ffffff" fill-opacity="0.12"/><rect x="944" y="0" width="1" height="106" fill="url(#ds)" fill-opacity="0.10"/><rect x="946" y="0" width="1" height="106" fill="#ffffff" fill-opacity="0.22"/><rect x="949" y="0" width="1" height="106" fill="url(#ds)" fill-opacity="0.17"/><rect x="950" y="0" width="1" height="106" fill="#ffffff" fill-opacity="0.17"/><rect x="952" y="0" width="1" height="106" fill="url(#ds)" fill-opacity="0.06"/><rect x="953" y="0" width="1" height="106" fill="url(#ds)" fill-opacity="0.22"/><rect x="956" y="0" width="1" height="106" fill="#ffffff" fill-opacity="0.09"/><rect x="957" y="0" width="1" height="106" fill="#ffffff" fill-opacity="0.21"/><rect x="960" y="0" width="2" height="106" fill="#ffffff" fill-opacity="0.13"/><rect x="964" y="0" width="1" height="106" fill="#ffffff" fill-opacity="0.07"/><rect x="967" y="0" width="2" height="106" fill="#ffffff" fill-opacity="0.05"/><rect x="970" y="0" width="2" height="106" fill="url(#ds)" fill-opacity="0.06"/><rect x="973" y="0" width="1" height="106" fill="#ffffff" fill-opacity="0.06"/><rect x="974" y="0" width="1" height="106" fill="url(#ds)" fill-opacity="0.07"/><rect x="976" y="0" width="1" height="106" fill="url(#ds)" fill-opacity="0.21"/><rect x="978" y="0" width="1" height="106" fill="#ffffff" fill-opacity="0.04"/><rect x="981" y="0" width="2" height="106" fill="url(#ds)" fill-opacity="0.22"/><rect x="984" y="0" width="1" height="106" fill="url(#ds)" fill-opacity="0.20"/><rect x="986" y="0" width="1" height="106" fill="url(#ds)" fill-opacity="0.12"/><rect x="987" y="0" width="1" height="106" fill="url(#ds)" fill-opacity="0.16"/><rect x="989" y="0" width="1" height="106" fill="url(#ds)" fill-opacity="0.15"/><rect x="990" y="0" width="2" height="106" fill="url(#ds)" fill-opacity="0.22"/><rect x="992" y="0" width="1" height="106" fill="#ffffff" fill-opacity="0.16"/><rect x="993" y="0" width="1" height="106" fill="#ffffff" fill-opacity="0.06"/><rect x="995" y="0" width="1" height="106" fill="#ffffff" fill-opacity="0.14"/><rect x="997" y="0" width="2" height="106" fill="url(#ds)" fill-opacity="0.22"/><rect x="1000" y="0" width="2" height="106" fill="url(#ds)" fill-opacity="0.21"/><rect x="1002" y="0" width="1" height="106" fill="url(#ds)" fill-opacity="0.18"/><rect x="1004" y="0" width="2" height="106" fill="url(#ds)" fill-opacity="0.09"/><rect x="1006" y="0" width="2" height="106" fill="#ffffff" fill-opacity="0.05"/><rect x="1010" y="0" width="1" height="106" fill="#ffffff" fill-opacity="0.10"/><rect x="1013" y="0" width="1" height="106" fill="url(#ds)" fill-opacity="0.21"/><rect x="1016" y="0" width="1" height="106" fill="#ffffff" fill-opacity="0.21"/><rect x="1018" y="0" width="1" height="106" fill="url(#ds)" fill-opacity="0.07"/><rect x="1019" y="0" width="1" height="106" fill="url(#ds)" fill-opacity="0.07"/></svg></div><svg width="1021" height="106" style="position:absolute;left:0;top:0"><defs><linearGradient id="gMon" x1="0" y1="0" x2="0" y2="1"><stop offset="0" stop-color="#7cc4f0"/><stop offset="0.45" stop-color="#3f8fd4"/><stop offset="1" stop-color="#1458b0"/></linearGradient><linearGradient id="gPad" x1="0" y1="0" x2="0" y2="1"><stop offset="0" stop-color="#fce8a0"/><stop offset="0.5" stop-color="#f8d470"/><stop offset="1" stop-color="#efbb50"/></linearGradient><linearGradient id="gBrown" x1="0" y1="0" x2="0" y2="1"><stop offset="0" stop-color="#8a4634"/><stop offset="1" stop-color="#6a2c20"/></linearGradient><linearGradient id="gGreen" x1="0" y1="0" x2="0" y2="1"><stop offset="0" stop-color="#8ed83a"/><stop offset="1" stop-color="#6cbc18"/></linearGradient><linearGradient id="gBlue" x1="0" y1="0" x2="0" y2="1"><stop offset="0" stop-color="#8cd0f4"/><stop offset="0.5" stop-color="#5cc4ec"/><stop offset="1" stop-color="#2cb0e4"/></linearGradient><linearGradient id="gRed" x1="0" y1="0" x2="0" y2="1"><stop offset="0" stop-color="#e8402c"/><stop offset="0.1" stop-color="#d81420"/><stop offset="1" stop-color="#c80c18"/></linearGradient><linearGradient id="gCoin" x1="0" y1="0" x2="1" y2="0"><stop offset="0" stop-color="#e8b848"/><stop offset="0.35" stop-color="#f8d878"/><stop offset="0.7" stop-color="#d8a030"/><stop offset="1" stop-color="#c88e24"/></linearGradient><linearGradient id="gCard" x1="0" y1="0" x2="1" y2="1"><stop offset="0" stop-color="#a8d4fa"/><stop offset="0.6" stop-color="#8cc2f4"/><stop offset="1" stop-color="#6aa8ec"/></linearGradient><linearGradient id="gSheet" x1="0" y1="0" x2="0" y2="1"><stop offset="0" stop-color="#f4f4f4"/><stop offset="1" stop-color="#dcdcdc"/></linearGradient><linearGradient id="gGear" x1="1" y1="0" x2="0" y2="1"><stop offset="0" stop-color="#d0d3d6"/><stop offset="0.5" stop-color="#9ca0a4"/><stop offset="1" stop-color="#8a8e92"/></linearGradient><radialGradient id="gFace" cx="0.5" cy="0.45" r="0.6"><stop offset="0" stop-color="#fee6b8"/><stop offset="1" stop-color="#f4c070"/></radialGradient><linearGradient id="gSuit" x1="0" y1="0" x2="0" y2="1"><stop offset="0" stop-color="#2a6cc0"/><stop offset="1" stop-color="#0c4ca0"/></linearGradient><linearGradient id="gHair" x1="0" y1="0" x2="0" y2="1"><stop offset="0" stop-color="#4a5a68"/><stop offset="0.5" stop-color="#1c2834"/><stop offset="1" stop-color="#101820"/></linearGradient><linearGradient id="gServer" x1="0" y1="0" x2="1" y2="0"><stop offset="0" stop-color="#c4c8cc"/><stop offset="0.5" stop-color="#eceef0"/><stop offset="1" stop-color="#c0c4c8"/></linearGradient><linearGradient id="gScreen" x1="0" y1="0" x2="0" y2="1"><stop offset="0" stop-color="#6a6c70"/><stop offset="0.5" stop-color="#2a2c30"/><stop offset="1" stop-color="#101014"/></linearGradient><linearGradient id="gHelp" x1="0" y1="0" x2="0" y2="1"><stop offset="0" stop-color="#e01818"/><stop offset="0.5" stop-color="#c0186a"/><stop offset="1" stop-color="#8a1aa0"/></linearGradient><linearGradient id="gSel" x1="0" y1="0" x2="0" y2="1"><stop offset="0" stop-color="#ffffff" stop-opacity="0.30"/><stop offset="1" stop-color="#ffffff" stop-opacity="0.10"/></linearGradient></defs><rect x="85.5" y="30.5" width="75" height="67" rx="4" ry="4" fill="url(#gSel)" stroke="#e8eaec" stroke-opacity="0.75" stroke-width="1"/><rect x="86.5" y="31.5" width="73" height="65" rx="3" ry="3" fill="none" stroke="#ffffff" stroke-opacity="0.25" stroke-width="1"/><rect x="31" y="42" width="29" height="22" rx="2.5" fill="#e4e8ec" stroke="#b8c0c8" stroke-width="0.6"/><rect x="33" y="44" width="25" height="18" rx="1" fill="url(#gMon)"/><rect x="33" y="44" width="25" height="2.5" fill="#90d4f8"/><rect x="33" y="46.5" width="25" height="4" fill="#5aaee6"/><rect x="33" y="50.5" width="25" height="4" fill="#3f90d6"/><rect x="33" y="54.5" width="25" height="4" fill="#2a74c4"/><rect x="33" y="58.5" width="25" height="3.5" fill="#165ab2"/><rect x="34" y="47" width="2" height="2" fill="#f0a060"/><rect x="34" y="50.5" width="2" height="2" fill="#f8d040"/><rect x="34" y="54" width="2" height="1.5" fill="#e0e8f0"/><rect x="34" y="56.5" width="2" height="2" fill="#f0b040"/><rect x="34" y="59.5" width="2" height="2" fill="#d8dce0"/><rect x="42" y="64" width="6" height="4" fill="#d0d4d8"/><rect x="40" y="68" width="10" height="3" rx="1" fill="#eef0f2"/><line x1="52.5" y1="66.5" x2="58.5" y2="70.5" stroke="#1a5aa8" stroke-width="3.2" stroke-linecap="round"/><circle cx="49.2" cy="62.8" r="5" fill="#f4f6f8" stroke="#c8ccd0" stroke-width="1.6"/><circle cx="48.6" cy="62" r="2.6" fill="#ffffff"/><rect x="111.5" y="48" width="23.5" height="23" rx="2" fill="url(#gPad)"/><rect x="113" y="51.5" width="21" height="1" fill="#9cbca4"/><rect x="113" y="54.5" width="21" height="1" fill="#9cbca4"/><rect x="113" y="57.5" width="21" height="1" fill="#9cbca4"/><rect x="113" y="60.5" width="21" height="1" fill="#9cbca4"/><rect x="113" y="63.5" width="21" height="0.8" fill="#d8b070" fill-opacity="0.8"/><rect x="113" y="65.8" width="21" height="0.8" fill="#d8b070" fill-opacity="0.8"/><rect x="113" y="68.3" width="21" height="0.8" fill="#d8b070" fill-opacity="0.8"/><rect x="115.5" y="50" width="0.8" height="19" fill="#b88a50" fill-opacity="0.6"/><path d="M111.5 49 Q111.5 43 116 43 L130.5 43 Q135 43 135 49 Z" fill="url(#gBrown)"/><rect x="116" y="71" width="16" height="1" fill="#000" fill-opacity="0.15"/><rect x="186" y="56.5" width="7.5" height="17.5" rx="3.5" fill="url(#gGreen)"/><rect x="197" y="48" width="8.5" height="26" rx="4" fill="url(#gBlue)"/><rect x="209" y="40" width="8.5" height="34" rx="4" fill="url(#gRed)"/><rect x="276.0" y="43.5" width="21.0" height="22.5" fill="url(#gCoin)"/><ellipse cx="286.5" cy="66" rx="10.5" ry="4" fill="#d09a30"/><path d="M276.0 49.0 Q286.5 55.4 297.0 49.0" fill="none" stroke="#b88420" stroke-width="0.8" stroke-opacity="0.7"/><path d="M276.0 52.0 Q286.5 58.4 297.0 52.0" fill="none" stroke="#b88420" stroke-width="0.8" stroke-opacity="0.7"/><path d="M276.0 55.0 Q286.5 61.4 297.0 55.0" fill="none" stroke="#b88420" stroke-width="0.8" stroke-opacity="0.7"/><path d="M276.0 58.0 Q286.5 64.4 297.0 58.0" fill="none" stroke="#b88420" stroke-width="0.8" stroke-opacity="0.7"/><path d="M276.0 61.0 Q286.5 67.4 297.0 61.0" fill="none" stroke="#b88420" stroke-width="0.8" stroke-opacity="0.7"/><path d="M276.0 64.0 Q286.5 70.4 297.0 64.0" fill="none" stroke="#b88420" stroke-width="0.8" stroke-opacity="0.7"/><ellipse cx="286.5" cy="43.5" rx="10.5" ry="4" fill="#f6d070" stroke="#d8a840" stroke-width="0.6"/><ellipse cx="285.5" cy="43.0" rx="7.5" ry="2.5" fill="#fbe49c" fill-opacity="0.7"/><rect x="261.5" y="57" width="23.0" height="15" fill="url(#gCoin)"/><ellipse cx="273" cy="72" rx="11.5" ry="4" fill="#d09a30"/><path d="M261.5 62.5 Q273 68.9 284.5 62.5" fill="none" stroke="#b88420" stroke-width="0.8" stroke-opacity="0.7"/><path d="M261.5 65.5 Q273 71.9 284.5 65.5" fill="none" stroke="#b88420" stroke-width="0.8" stroke-opacity="0.7"/><path d="M261.5 68.5 Q273 74.9 284.5 68.5" fill="none" stroke="#b88420" stroke-width="0.8" stroke-opacity="0.7"/><path d="M261.5 71.5 Q273 77.9 284.5 71.5" fill="none" stroke="#b88420" stroke-width="0.8" stroke-opacity="0.7"/><ellipse cx="273" cy="57" rx="11.5" ry="4" fill="#f6d070" stroke="#d8a840" stroke-width="0.6"/><ellipse cx="272" cy="56.5" rx="8.5" ry="2.5" fill="#fbe49c" fill-opacity="0.7"/><rect x="345" y="50" width="30" height="20" rx="1" fill="#3a9c2c"/><rect x="348" y="66" width="24" height="1.5" fill="#7cc870"/><rect x="370" y="57" width="4" height="5" fill="#e8e8e8"/><rect x="339" y="44" width="30" height="20.5" rx="1.5" fill="url(#gCard)"/><rect x="361" y="52" width="6" height="4" fill="#d8d8d8"/><circle cx="362" cy="58.8" r="1.8" fill="#e83030"/><circle cx="365" cy="58.8" r="1.8" fill="#f0b030"/><rect x="341" y="47" width="8" height="1.5" fill="#2a6ab0" fill-opacity="0.7"/><rect x="341" y="57" width="18" height="1" fill="#ffffff" fill-opacity="0.6"/><rect x="418" y="40.5" width="26" height="30.5" rx="1" fill="url(#gSheet)" stroke="#a8a8a8" stroke-width="0.8"/><rect x="419" y="44" width="24" height="0.8" fill="#b0b0b0"/><rect x="419" y="47" width="24" height="0.8" fill="#b0b0b0"/><rect x="419" y="50" width="24" height="0.8" fill="#b0b0b0"/><rect x="419" y="53" width="24" height="0.8" fill="#b0b0b0"/><rect x="419" y="56" width="24" height="0.8" fill="#b0b0b0"/><rect x="419" y="59" width="24" height="0.8" fill="#b0b0b0"/><rect x="419" y="62" width="24" height="0.8" fill="#b0b0b0"/><rect x="419" y="65" width="24" height="0.8" fill="#b0b0b0"/><rect x="419" y="68" width="24" height="0.8" fill="#b0b0b0"/><rect x="425" y="41" width="0.9" height="30" fill="#909090"/><rect x="434" y="41" width="0.9" height="30" fill="#b0b0b0"/><ellipse cx="440.5" cy="64.5" rx="11.5" ry="8" fill="#a01010"/><rect x="429" y="59" width="23" height="5.5" fill="#b81818"/><path d="M440.5 64.5 L440.5 72.5 A11.5 8 0 0 0 429 64.5 L429 61 Z" fill="#c01818" /><path d="M436 63 L440.5 64.5 L440.5 72.5 Q437.5 72.4 436 72 Z" fill="#30a020"/><path d="M440.5 64.5 L440.5 72.5 A11.5 8 0 0 0 452 64.5 L452 60 Z" fill="#2a5ab0"/><ellipse cx="440.5" cy="59.5" rx="11.5" ry="8" fill="#e84a40"/><path d="M440.5 59.5 L452 59.5 A11.5 8 0 0 1 441 67.5 Z" fill="#3a78c8"/><path d="M440.5 59.5 L441 67.5 A11.5 8 0 0 1 435.5 66.6 Z" fill="#60c030"/><polygon points="509.60,44.20 510.85,40.32 514.75,40.32 516.00,44.20 516.33,44.29 519.35,41.55 522.73,43.50 521.87,47.49 522.11,47.73 526.10,46.87 528.05,50.25 525.31,53.27 525.40,53.60 529.28,54.85 529.28,58.75 525.40,60.00 525.31,60.33 528.05,63.35 526.10,66.73 522.11,65.87 521.87,66.11 522.73,70.10 519.35,72.05 516.33,69.31 516.00,69.40 514.75,73.28 510.85,73.28 509.60,69.40 509.27,69.31 506.25,72.05 502.87,70.10 503.73,66.11 503.49,65.87 499.50,66.73 497.55,63.35 500.29,60.33 500.20,60.00 496.32,58.75 496.32,54.85 500.20,53.60 500.29,53.27 497.55,50.25 499.50,46.87 503.49,47.73 503.73,47.49 502.87,43.50 506.25,41.55 509.27,44.29" fill="url(#gGear)" stroke="#6a6e72" stroke-opacity="0.8" stroke-width="0.7" stroke-linejoin="round"/><circle cx="512.8" cy="56.8" r="9.6" fill="#aeb2b6" stroke="#4e5256" stroke-width="1.1"/><circle cx="512.8" cy="56.8" r="8" fill="#bcc0c4"/><rect x="512.1999999999999" y="48.8" width="1.2" height="7" fill="#e8eaec"/><path d="M507.29999999999995 55.3 Q507.79999999999995 59.3 510.79999999999995 59.3" fill="none" stroke="#303840" stroke-width="1.8"/><path d="M518.3 55.3 Q517.8 59.3 514.8 59.3" fill="none" stroke="#303840" stroke-width="1.8"/><ellipse cx="512.8" cy="62.0" rx="2.8" ry="1" fill="#ffffff" fill-opacity="0.85"/><path d="M575 74 Q575 65 584 63 L599 63 Q607 65 607 74 Z" fill="url(#gSuit)" stroke="#0a1a30" stroke-width="0.8"/><path d="M584.5 63.5 L591 71.5 L597.5 63.5 Z" fill="#ffffff"/><path d="M590 66 L592 66 L593.2 72.5 L591 74 L588.8 72.5 Z" fill="#0c3c90"/><ellipse cx="579" cy="54" rx="3" ry="4" fill="#f0c070" stroke="#3a2a20" stroke-width="0.7"/><ellipse cx="603" cy="54" rx="3" ry="4" fill="#f0c070" stroke="#3a2a20" stroke-width="0.7"/><ellipse cx="591" cy="55" rx="10" ry="10.8" fill="url(#gFace)" stroke="#3a2a20" stroke-width="0.7"/><path d="M579 51 Q578 40 591 39.5 Q600 39 602 41 L601 43 Q604 46 603 51 Q598 47 590 48 Q583 48 579 51 Z" fill="url(#gHair)" stroke="#0a0e14" stroke-width="0.7"/><rect x="652" y="41" width="13" height="18.5" rx="1.5" fill="url(#gServer)"/><rect x="654" y="45" width="9" height="1.6" rx="0.8" fill="#3a88d8"/><rect x="654" y="49.5" width="9" height="1.6" rx="0.8" fill="#3a88d8"/><rect x="654" y="54" width="9" height="1.6" rx="0.8" fill="#3a88d8"/><path d="M667 42.5 Q673.5 41 676.8 45 L680 42.5 L681.2 51.5 L672.3 51 L675 48.5 Q672 45.3 667 46.2 Z" fill="#f0a018"/><path d="M668 71.5 Q661.5 73 658.2 69 L655 71.5 L653.8 62.5 L662.7 63 L660 65.5 Q663 68.7 668 67.8 Z" fill="#f0a018"/><rect x="667" y="54" width="19" height="14" rx="1" fill="#f4f4f4" stroke="#c8c8c8" stroke-width="0.5"/><rect x="669" y="56" width="15" height="10" fill="url(#gScreen)"/><rect x="673" y="68" width="7" height="3.5" fill="#d4d4d4"/><circle cx="746.8" cy="56.8" r="16.3" fill="url(#gHelp)" stroke="#5a1010" stroke-opacity="0.5" stroke-width="0.8"/><path d="M741.3 51 Q741.3 46.3 746.8 46.3 Q752.3 46.3 752.3 50.6 Q752.3 53.2 749.3 55 Q747.3 56.2 747.3 59 L747.3 61.5" fill="none" stroke="#ffffff" stroke-width="3.8"/><rect x="745.2" y="64" width="4" height="3.8" fill="#e8f0ff"/><rect x="994.5" y="69.5" width="11" height="11" fill="#ffffff" stroke="#505050" stroke-opacity="0.6" stroke-width="1"/><rect x="996" y="71" width="4" height="4" fill="#f8c860"/><rect x="1000" y="71" width="4" height="4" fill="#e050e0"/><rect x="996" y="75" width="4" height="4" fill="#50e060"/><rect x="1000" y="75" width="4" height="4" fill="#4890e0"/><path d="M865.5 -2 L865.5 14 Q865.5 18.5 870 18.5 L1008 18.5 Q1012.5 18.5 1012.5 14 L1012.5 -2" fill="#ffffff" fill-opacity="0.05" stroke="#70757a" stroke-opacity="0.65" stroke-width="1"/><path d="M866.5 -2 L866.5 14 Q866.5 19.5 870 19.5 L1008 19.5 Q1011.5 19.5 1011.5 14 L1011.5 -2" fill="none" stroke="#ffffff" stroke-opacity="0.0" stroke-width="1"/><path d="M877 13.3 L878.2 11.3 Q874.8 10.9 874.8 7.9 Q874.8 4.6 879.3 4.6 L881 4.6 Q885.2 4.6 885.2 7.9 Q885.2 11.2 881 11.3 L879.2 11.3 Z" stroke="#4a4e52" fill="none" stroke-opacity="0.75" stroke-width="3.2" stroke-linejoin="round"/><path d="M877 13.3 L878.2 11.3 Q874.8 10.9 874.8 7.9 Q874.8 4.6 879.3 4.6 L881 4.6 Q885.2 4.6 885.2 7.9 Q885.2 11.2 881 11.3 L879.2 11.3 Z" stroke="#ffffff" fill="none" stroke-width="1.6" stroke-linejoin="round"/><path d="M880.3 6.4 L882 7.9 L880.3 9.4" stroke="#ffffff" fill="none" stroke-width="1.1"/><path d="M902.5 4 L911.5 4 L911.5 12 L902.5 12 Z" stroke="#4a4e52" fill="none" stroke-opacity="0.75" stroke-width="3.2"/><path d="M902.5 4 L911.5 4 L911.5 12 L902.5 12 Z" stroke="#ffffff" fill="none" stroke-width="1.6"/><rect x="904" y="6.5" width="4" height="1.2" fill="#fff"/><rect x="904" y="9" width="4" height="1.2" fill="#fff"/><path d="M909 9 L911 11 M909 11 L909 9 L911 9" stroke="#fff" stroke-width="1"/><rect x="928.5" y="8.5" width="10" height="3" fill="#ffffff" stroke="#4a4e52" stroke-opacity="0.75" stroke-width="1"/><rect x="956.5" y="4.5" width="8" height="8" stroke="#4a4e52" fill="none" stroke-opacity="0.75" stroke-width="3.4"/><rect x="956.5" y="4.5" width="8" height="8" stroke="#ffffff" fill="none" stroke-width="1.8"/><path d="M989 5.3 L996 12.3 M996 5.3 L989 12.3" stroke="#4a4e52" fill="none" stroke-opacity="0.75" stroke-width="3.86" stroke-linecap="square"/><path d="M989 5.3 L996 12.3 M996 5.3 L989 12.3" stroke="#ffffff" fill="none" stroke-width="2.21" stroke-linecap="square"/><rect x="6" y="5" width="16" height="16" fill="#ffffff"/><ellipse cx="14" cy="10.5" rx="4" ry="3.2" fill="#f4f4f0" stroke="#c8c0a0" stroke-width="0.5"/><circle cx="10.5" cy="7.2" r="1.1" fill="#e82020"/><rect x="9.6" y="8" width="1" height="10" fill="#c8b070" fill-opacity="0.6"/><circle cx="15.5" cy="6.2" r="0.9" fill="#d82020"/><ellipse cx="15" cy="8.8" rx="1.4" ry="0.8" fill="#202020"/><rect x="10.5" y="13" width="6" height="1.6" rx="0.5" fill="#e81818"/><circle cx="13.5" cy="15.3" r="1.2" fill="#e0a020"/><rect x="10" y="16" width="8" height="3" fill="#ece8d8" stroke="#c8a870" stroke-width="0.4"/></svg><div id="grid"><div class="hc" style="left:0px;top:0px;width:20px;height:18px;"></div><div class="hc" style="left:0px;top:18px;width:20px;height:18px;"></div><div class="hc" style="left:0px;top:36px;width:20px;height:18px;"></div><div class="hc" style="left:20px;top:0px;width:289px;height:18px;"><i class="c">商</i><i class="c">品</i><i class="c">信</i><i class="c">息</i></div><div class="hc" style="left:309px;top:0px;width:439px;height:18px;"><i class="c">销</i><i class="c">售</i><i class="c">信</i><i class="c">息</i></div><div class="hc" style="left:748px;top:0px;width:270px;height:18px;"><i class="c">客</i><i class="c">户</i><i class="c">信</i><i class="c">息</i></div><div class="hc" style="left:20px;top:18px;width:101px;height:18px;"><i class="c">名</i><i class="c">称</i></div><div class="hc" style="left:121px;top:18px;width:66px;height:18px;"><i class="c">型</i><i class="c">号</i></div><div class="hc" style="left:187px;top:18px;width:61px;height:18px;"><i class="c">编</i><i class="c">码</i></div><div class="hc" style="left:248px;top:18px;width:61px;height:18px;"><i class="c">类</i><i class="c">型</i></div><div class="hc" style="left:309px;top:18px;width:55px;height:18px;"><i class="c">单</i><i class="c">价</i></div><div class="hc" style="left:364px;top:18px;width:55px;height:18px;"><i class="c">数</i><i class="c">量</i></div><div class="hc" style="left:419px;top:18px;width:86px;height:18px;"><i class="c">金</i><i class="c">额</i></div><div class="hc" style="left:505px;top:18px;width:91px;height:18px;"><i class="c">日</i><i class="c">期</i></div><div class="hc" style="left:596px;top:18px;width:66px;height:18px;"><i class="c">欠</i><i class="c">款</i><i class="c">额</i></div><div class="hc" style="left:662px;top:18px;width:86px;height:18px;"><i class="c">净</i><i class="c">利</i><i class="c">润</i></div><div class="hc" style="left:748px;top:18px;width:35px;height:18px;"><i class="c">编</i><i class="c">号</i></div><div class="hc" style="left:783px;top:18px;width:45px;height:18px;"><i class="c">名</i><i class="c">称</i></div><div class="hc" style="left:828px;top:18px;width:45px;height:18px;"><i class="c">电</i><i class="c">话</i></div><div class="hc" style="left:873px;top:18px;width:61px;height:18px;"><i class="c">地</i><i class="c">址</i></div><div class="hc" style="left:934px;top:18px;width:84px;height:18px;"><i class="c">备</i><i class="c">注</i></div><div class="oc" style="left:20px;top:36px;width:101px;height:18px;text-align:left;padding-left:2px;font-size:12px;line-height:19px;-webkit-text-stroke:0.3px #000;"><i class="c">合</i><i class="c">计</i><i class="c">：</i></div><div class="oc" style="left:121px;top:36px;width:66px;height:18px;"></div><div class="oc" style="left:187px;top:36px;width:61px;height:18px;"></div><div class="oc" style="left:248px;top:36px;width:61px;height:18px;"></div><div class="oc" style="left:309px;top:36px;width:55px;height:18px;"></div><div class="oc" style="left:364px;top:36px;width:55px;height:18px;">0</div><div class="oc" style="left:419px;top:36px;width:86px;height:18px;">0.0</div><div class="oc" style="left:505px;top:36px;width:91px;height:18px;"></div><div class="oc" style="left:596px;top:36px;width:66px;height:18px;">0.0</div><div class="oc" style="left:662px;top:36px;width:86px;height:18px;">0.0</div><div class="oc" style="left:748px;top:36px;width:35px;height:18px;"></div><div class="oc" style="left:783px;top:36px;width:45px;height:18px;"></div><div class="oc" style="left:828px;top:36px;width:45px;height:18px;"></div><div class="oc" style="left:873px;top:36px;width:61px;height:18px;"></div><div class="oc" style="left:934px;top:36px;width:84px;height:18px;"></div></div><div id="lower"></div><div id="panel"></div><div id="status"><div class="st" style="left:5px"><i class="c">当</i><i class="c">前</i><i class="c">操</i><i class="c">作</i><i class="c">：</i><i class="c">超</i><i class="c">级</i><i class="c">管</i><i class="c">理</i><i class="c">员</i></div><div class="st" style="left:249px"><i class="c">今</i><i class="c">天</i><i class="c">是</i><i class="c">：</i><span class="d">2016-3-30</span></div><div class="st" style="left:605px"><i class="c">网</i><i class="c">站</i><i class="c">：</i><span style="font-family:'Liberation Mono',monospace;font-size:10px;letter-spacing:0.18px">www.molurj.tap.cn</span></div><div class="st" style="left:837px"><i class="c">技</i><i class="c">术</i><i class="c">支</i><i class="c">持</i><span class="d">(MoLu)QQ:782327651</span></div></div><div class="tb" style="left:-0.5px"><i class="c">商</i><i class="c">品</i><i class="c">库</i></div><div class="tb" style="left:83px"><i class="c">销</i><i class="c">售</i><i class="c">明</i><i class="c">细</i></div><div class="tb" style="left:161.5px"><i class="c">销</i><i class="c">售</i><i class="c">图</i><i class="c">表</i></div><div class="tb" style="left:239.5px"><i class="c">其</i><i class="c">他</i><i class="c">收</i><i class="c">支</i></div><div class="tb" style="left:317.5px"><i class="c">存</i><i class="c">款</i><i class="c">管</i><i class="c">理</i></div><div class="tb" style="left:395px"><i class="c">汇</i><i class="c">总</i><i class="c">统</i><i class="c">计</i></div><div class="tb" style="left:473px"><i class="c">系</i><i class="c">统</i><i class="c">设</i><i class="c">置</i></div><div class="tb" style="left:551px"><i class="c">用</i><i class="c">户</i><i class="c">管</i><i class="c">理</i></div><div class="tb" style="left:629px"><i class="c">数</i><i class="c">据</i><i class="c">管</i><i class="c">理</i></div><div class="tb" style="left:707px"><i class="c">关</i><i class="c">于</i><i class="c">我</i><i class="c">们</i></div><div class="a" style="left:26px;top:6px;color:#fff;font-weight:bold;font-size:13px;line-height:16px;-webkit-text-stroke:0.45px #fff"><i class="c">招</i><i class="c">财</i><i class="c">猫</i><i class="c">商</i><i class="c">品</i><i class="c">进</i><i class="c">销</i><i class="c">存</i><i class="c">系</i><i class="c">统</i></div><div class="a" style="left:160px;top:7px;color:#fff;font-weight:bold;font-size:12px;line-height:14px;-webkit-text-stroke:0.3px #fff;letter-spacing:3px">v1.0</div><div class="a" style="left:200px;top:7px;color:#fff;font-weight:bold;font-size:12px;line-height:14px;-webkit-text-stroke:0.3px #fff">-</div><div class="a" style="left:215px;top:6px;color:#fff;font-weight:bold;font-size:13px;line-height:16px;-webkit-text-stroke:0.45px #fff"><i class="c">简</i><i class="c">单</i><i class="c">版</i></div><div class="lbl" style="left:13px;top:588px"><i class="c">类</i><i class="c">别</i><i class="c">查</i><i class="c">询</i><i class="c">：</i></div><div class="lbl" style="left:13px;top:619px"><i class="c">规</i><i class="c">格</i><i class="c">型</i><i class="c">号</i><i class="c">：</i></div><div class="tx" style="left:76px;top:584px;width:100px;height:20px"></div><div class="cb" style="left:158px;top:586px;width:16px;height:16px"></div><div class="tx" style="left:76px;top:615px;width:100px;height:22px"></div><div class="lbl" style="left:197px;top:588px"><i class="c">商</i><i class="c">品</i><i class="c">名</i><i class="c">称</i><i class="c">：</i></div><div class="lbl" style="left:197px;top:619px"><i class="c">商</i><i class="c">品</i><i class="c">编</i><i class="c">码</i><i class="c">：</i></div><div class="tx" style="left:261px;top:584px;width:120px;height:22px"></div><div class="tx" style="left:261px;top:615px;width:120px;height:22px"></div><div class="lbl" style="left:394px;top:619px"><i class="c">客</i><i class="c">户</i><i class="c">名</i><i class="c">称</i><i class="c">：</i></div><div class="tx" style="left:456px;top:615px;width:95px;height:20px"></div><div class="cb" style="left:533px;top:617px;width:16px;height:16px"></div><div class="lbl" style="left:563px;top:619px"><i class="c">备</i></div><div class="lbl" style="left:598px;top:619px"><i class="c">注</i><i class="c">：</i></div><div class="tx" style="left:625px;top:615px;width:120px;height:22px"></div><div class="lbl" style="left:563px;top:587px;font-size:14px;line-height:14px;-webkit-text-stroke:0.3px #000"><i class="c">至</i></div><div class="btn" style="left:762px;top:582px;width:78px;height:22px"><i class="c">日</i><i class="c">期</i><i class="c">查</i><i class="c">询</i></div><div class="btn" style="left:846px;top:582px;width:124px;height:22px"><i class="c">显</i><i class="c">示</i><i class="c">全</i><i class="c">部</i><i class="c">记</i><i class="c">录</i></div><div class="btn" style="left:762px;top:614px;width:78px;height:22px"><i class="c">显</i><i class="c">示</i><i class="c">欠</i><i class="c">款</i></div><div class="btn" style="left:846px;top:614px;width:58px;height:22px"><i class="c">显</i><i class="c">示</i><i class="c">当</i><i class="c">天</i></div><div class="btn" style="left:912px;top:614px;width:58px;height:22px"><i class="c">显</i><i class="c">示</i><i class="c">本</i><i class="c">月</i></div><div class="dp" style="left:397px;top:583px"><div class="dpb"></div></div><div class="dp" style="left:597px;top:583px"><div class="dpb"></div></div><div class="lbl" style="left:401px;top:587px"><i class="c">星</i><i class="c">期</i><i class="c">三</i><span class="sp"></span><span class="d">2016</span><i class="c">年</i><span class="d">03</span><i class="c">月</i><span class="d">30</span><i class="c">日</i></div><div class="lbl" style="left:601px;top:587px"><i class="c">星</i><i class="c">期</i><i class="c">三</i><span class="sp"></span><span class="d" style="background:#3399ff;color:#fff">2016</span><i class="c">年</i><span class="d">03</span><i class="c">月</i><span class="d">30</span><i class="c">日</i></div><svg width="1021" height="678" style="position:absolute;left:0;top:0"><path d="M163 592.3 L166.5 595.8 L170 592.3" fill="none" stroke="#000" stroke-width="2.1" stroke-linecap="square"/><path d="M538 623.3 L541.5 626.8 L545 623.3" fill="none" stroke="#000" stroke-width="2.1" stroke-linecap="square"/></svg><svg width="1021" height="678" style="position:absolute;left:0;top:0"><rect x="0" y="0" width="1021" height="1" fill="#d6d8de"/><rect x="0" y="0" width="1" height="654" fill="#c4c7ca"/><rect x="1020" y="0" width="1" height="678" fill="#c8cacc"/><rect x="0" y="0" width="1" height="1" fill="#404448"/><rect x="1020" y="0" width="1" height="1" fill="#404448"/><path d="M1010 674.5 L1018.5 666" stroke="#c8ccd0" stroke-width="1" stroke-dasharray="1 1"/><path d="M1013 674.5 L1018.5 669" stroke="#c8ccd0" stroke-width="1" stroke-dasharray="1 1"/><path d="M1016 674.5 L1018.5 672" stroke="#c8ccd0" stroke-width="1" stroke-dasharray="1 1"/></svg></body></html>
